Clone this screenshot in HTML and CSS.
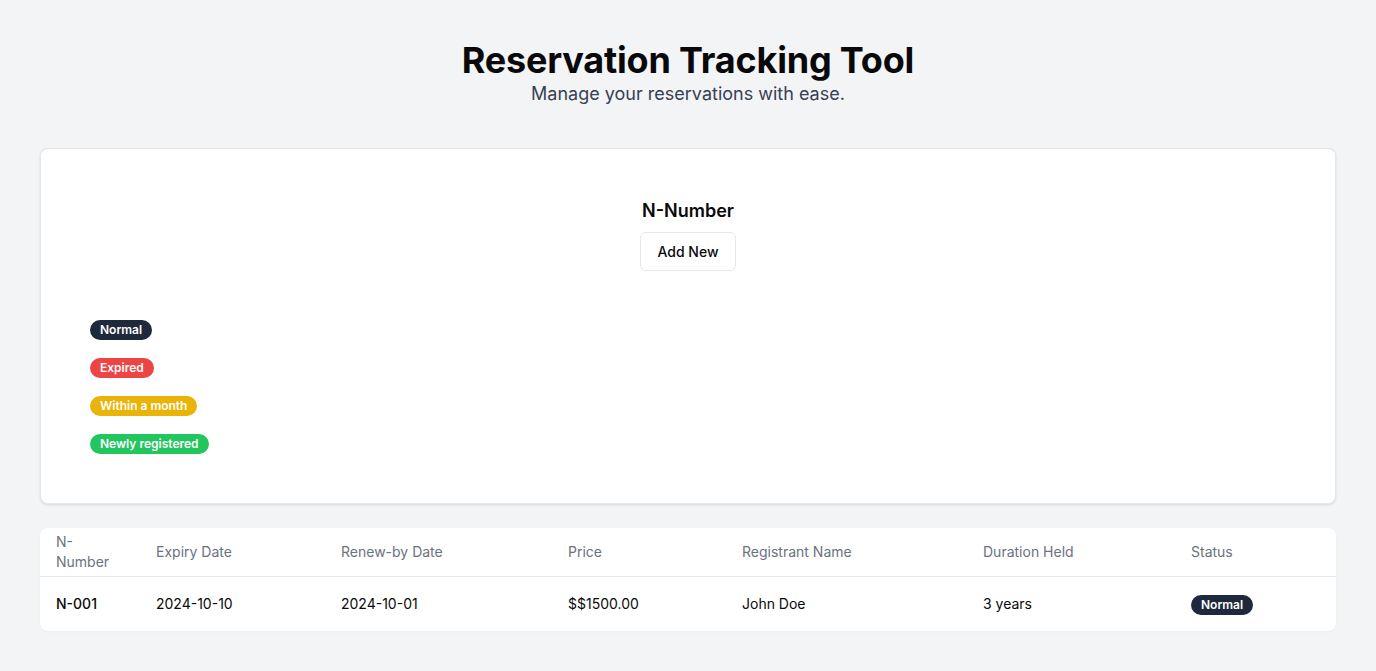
FILE: index.html
```html
<!DOCTYPE html>
<html lang="en">
<head>
<meta charset="utf-8">
<title>Reservation Tracking Tool</title>
<link rel="stylesheet" href="styles.css">
</head>
<body>
<main class="page">
  <header class="hero">
    <h1 class="title">Reservation Tracking Tool</h1>
    <p class="subtitle">Manage your reservations with ease.</p>
  </header>

  <section class="card">
    <div class="card-head">
      <h2 class="card-title">N-Number</h2>
      <button class="btn">Add New</button>
    </div>
    <div class="legend">
      <span class="badge badge-normal">Normal</span>
      <span class="badge badge-expired">Expired</span>
      <span class="badge badge-month">Within a month</span>
      <span class="badge badge-new">Newly registered</span>
    </div>
  </section>

  <section class="table-card">
    <table class="table">
      <colgroup>
        <col class="c1"><col class="c2"><col class="c3"><col class="c4"><col class="c5"><col class="c6"><col class="c7">
      </colgroup>
      <thead>
        <tr>
          <th>N-Number</th>
          <th>Expiry Date</th>
          <th>Renew-by Date</th>
          <th>Price</th>
          <th>Registrant Name</th>
          <th>Duration Held</th>
          <th>Status</th>
        </tr>
      </thead>
      <tbody>
        <tr>
          <td class="strong">N-001</td>
          <td>2024-10-10</td>
          <td>2024-10-01</td>
          <td>$$1500.00</td>
          <td>John Doe</td>
          <td>3 years</td>
          <td><span class="badge badge-normal">Normal</span></td>
        </tr>
      </tbody>
    </table>
  </section>
</main>
</body>
</html>
```

FILE: styles.css
```css
* { box-sizing: border-box; }

html, body {
  margin: 0;
  padding: 0;
  background: #f3f4f6;
  font-family: Inter, "Liberation Sans", Arial, sans-serif;
  color: #0a0a0a;
}

.page {
  padding: 40px 40px 40px;
}

.hero {
  text-align: center;
  margin-bottom: 40px;
}

.title {
  margin: 0;
  font-size: 36px;
  line-height: 40px;
  font-weight: 700;
  color: #09090b;
  letter-spacing: -0.2px;
}

.subtitle {
  margin: 0;
  font-size: 18px;
  line-height: 28px;
  color: #374151;
}

.card {
  background: #fff;
  border: 1px solid #e5e7eb;
  border-radius: 8px;
  box-shadow: 0 1px 3px rgba(0,0,0,0.08), 0 1px 2px rgba(0,0,0,0.04);
  padding: 48px 49px 49px;
}

.card-head {
  display: flex;
  flex-direction: column;
  align-items: center;
  gap: 7px;
}

.card-title {
  margin: 0;
  font-size: 18px;
  line-height: 28px;
  font-weight: 600;
  color: #09090b;
}

.btn {
  font-family: inherit;
  font-size: 14px;
  line-height: 20px;
  font-weight: 500;
  color: #09090b;
  background: #fff;
  border: 1px solid #e5e7eb;
  border-radius: 6px;
  height: 39px;
  padding: 0 16px;
}

.legend {
  margin-top: 49px;
  display: flex;
  flex-direction: column;
  align-items: flex-start;
  gap: 18px;
}

.badge {
  display: inline-flex;
  align-items: center;
  height: 20px;
  padding: 0 10px;
  border-radius: 9999px;
  font-size: 12px;
  line-height: 16px;
  font-weight: 600;
  color: #fff;
}

.badge-normal { background: #1e293b; }
.badge-expired { background: #ef4444; }
.badge-month { background: #eab308; }
.badge-new { background: #22c55e; }

.table-card {
  margin-top: 24px;
  background: #fff;
  border-radius: 8px;
  box-shadow: 0 1px 2px rgba(0,0,0,0.03);
  overflow: hidden;
}

.table {
  width: 100%;
  border-collapse: collapse;
  table-layout: fixed;
  font-size: 14px;
  line-height: 20px;
}

.c1 { width: 100px; }
.c2 { width: 185px; }
.c3 { width: 227px; }
.c4 { width: 174px; }
.c5 { width: 241px; }
.c6 { width: 208px; }

.table th {
  height: 48px;
  padding: 0 16px;
  text-align: left;
  vertical-align: middle;
  font-weight: 400;
  color: #6b7280;
  border-bottom: 1px solid #e5e7eb;
}

.table td {
  padding: 17px 16px 16px;
  vertical-align: middle;
  color: #0a0a0a;
}

.table td.strong {
  font-weight: 500;
}
```
